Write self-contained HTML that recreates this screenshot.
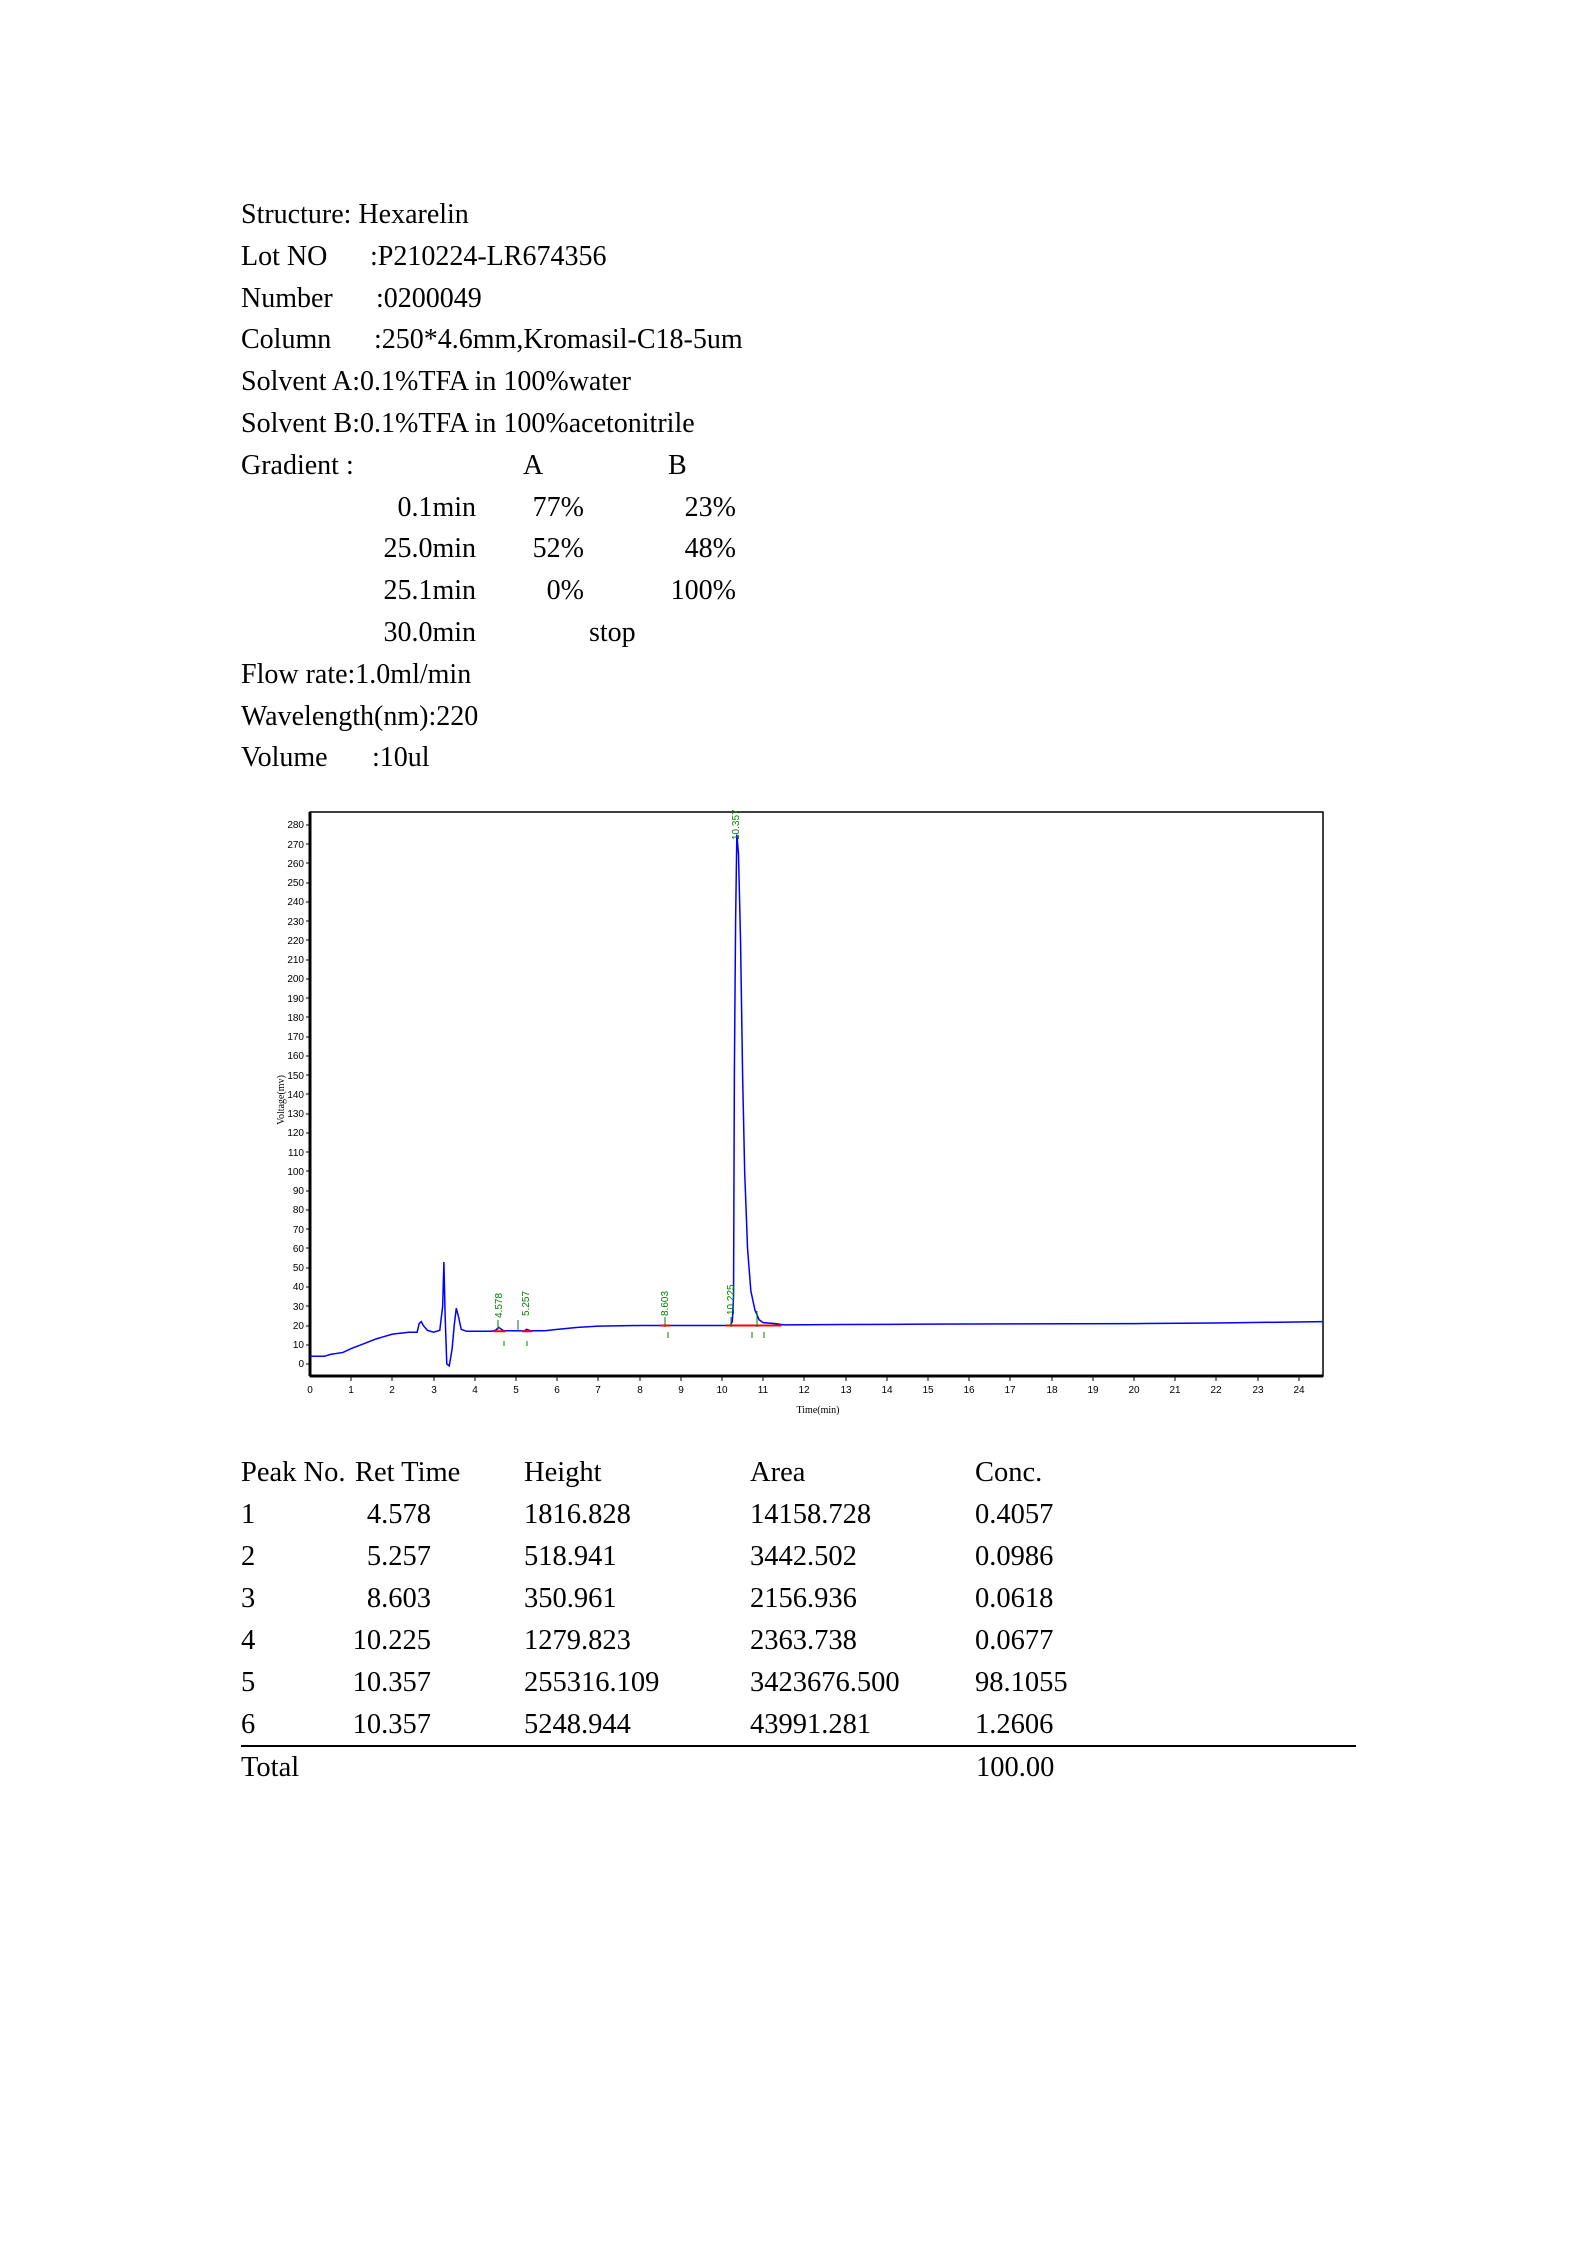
<!DOCTYPE html>
<html><head><meta charset="utf-8"><style>
body{margin:0;background:#fff;}
.p{position:relative;width:1587px;height:2245px;overflow:hidden;font-family:"Liberation Serif",serif;color:#000;}
.t{position:absolute;font-size:28px;line-height:42px;white-space:pre;}
.q{font-size:28.5px;}
.r{text-align:right;}
</style></head><body><div class="p">
<div class="t" style="left:241px;top:194px">Structure: Hexarelin</div>
<div class="t" style="left:241px;top:236px">Lot NO</div><div class="t" style="left:370px;top:236px">:P210224-LR674356</div>
<div class="t" style="left:241px;top:278px">Number</div><div class="t" style="left:376px;top:278px">:0200049</div>
<div class="t" style="left:241px;top:319px">Column</div><div class="t" style="left:374px;top:319px">:250*4.6mm,Kromasil-C18-5um</div>
<div class="t" style="left:241px;top:361px">Solvent A:0.1%TFA in 100%water</div>
<div class="t" style="left:241px;top:403px">Solvent B:0.1%TFA in 100%acetonitrile</div>
<div class="t" style="left:241px;top:445px">Gradient :</div><div class="t" style="left:523px;top:445px">A</div><div class="t" style="left:668px;top:445px">B</div>
<div class="t r" style="left:300px;width:176px;top:487px">0.1min</div><div class="t r" style="left:480px;width:104px;top:487px">77%</div><div class="t r" style="left:630px;width:106px;top:487px">23%</div>
<div class="t r" style="left:300px;width:176px;top:528px">25.0min</div><div class="t r" style="left:480px;width:104px;top:528px">52%</div><div class="t r" style="left:630px;width:106px;top:528px">48%</div>
<div class="t r" style="left:300px;width:176px;top:570px">25.1min</div><div class="t r" style="left:480px;width:104px;top:570px">0%</div><div class="t r" style="left:630px;width:106px;top:570px">100%</div>
<div class="t r" style="left:300px;width:176px;top:612px">30.0min</div><div class="t" style="left:589px;top:612px">stop</div>
<div class="t" style="left:241px;top:654px">Flow rate:1.0ml/min</div>
<div class="t" style="left:241px;top:696px">Wavelength(nm):220</div>
<div class="t" style="left:241px;top:737px">Volume</div><div class="t" style="left:372px;top:737px">:10ul</div>

<svg style="position:absolute;left:0;top:0" width="1587" height="2245">
<rect x="310" y="812" width="1013" height="564" fill="none" stroke="#000" stroke-width="1.5"/>
<line x1="310" y1="1376" x2="1323" y2="1376" stroke="#000" stroke-width="3"/>
<line x1="310" y1="812" x2="310" y2="1376" stroke="#000" stroke-width="3"/>
<g font-family="Liberation Sans,sans-serif" font-size="10" fill="#000" text-anchor="end">
<text x="304" y="1367">0</text><text x="304" y="1348">10</text><text x="304" y="1329">20</text><text x="304" y="1310">30</text><text x="304" y="1290">40</text><text x="304" y="1271">50</text><text x="304" y="1252">60</text><text x="304" y="1233">70</text><text x="304" y="1213">80</text><text x="304" y="1194">90</text><text x="304" y="1175">100</text><text x="304" y="1156">110</text><text x="304" y="1136">120</text><text x="304" y="1117">130</text><text x="304" y="1098">140</text><text x="304" y="1079">150</text><text x="304" y="1059">160</text><text x="304" y="1040">170</text><text x="304" y="1021">180</text><text x="304" y="1002">190</text><text x="304" y="982">200</text><text x="304" y="963">210</text><text x="304" y="944">220</text><text x="304" y="925">230</text><text x="304" y="905">240</text><text x="304" y="886">250</text><text x="304" y="867">260</text><text x="304" y="848">270</text><text x="304" y="828">280</text>
</g>
<g font-family="Liberation Sans,sans-serif" font-size="10" fill="#000" text-anchor="middle">
<text x="310" y="1393">0</text><text x="351" y="1393">1</text><text x="392" y="1393">2</text><text x="434" y="1393">3</text><text x="475" y="1393">4</text><text x="516" y="1393">5</text><text x="557" y="1393">6</text><text x="598" y="1393">7</text><text x="640" y="1393">8</text><text x="681" y="1393">9</text><text x="722" y="1393">10</text><text x="763" y="1393">11</text><text x="804" y="1393">12</text><text x="846" y="1393">13</text><text x="887" y="1393">14</text><text x="928" y="1393">15</text><text x="969" y="1393">16</text><text x="1010" y="1393">17</text><text x="1052" y="1393">18</text><text x="1093" y="1393">19</text><text x="1134" y="1393">20</text><text x="1175" y="1393">21</text><text x="1216" y="1393">22</text><text x="1258" y="1393">23</text><text x="1299" y="1393">24</text>
<text x="818" y="1413" font-family="Liberation Serif,serif">Time(min)</text>
<text transform="translate(284,1100) rotate(-90)" font-family="Liberation Serif,serif">Voltage(mv)</text>
</g>
<path d="M306 1364h4M306 1345h4M306 1326h4M306 1306h4M306 1287h4M306 1268h4M306 1248h4M306 1229h4M306 1210h4M306 1191h4M306 1171h4M306 1152h4M306 1133h4M306 1114h4M306 1094h4M306 1075h4M306 1056h4M306 1037h4M306 1017h4M306 998h4M306 979h4M306 960h4M306 940h4M306 921h4M306 902h4M306 883h4M306 863h4M306 844h4M306 825h4
M351 1376v5M392 1376v5M434 1376v5M475 1376v5M516 1376v5M557 1376v5M598 1376v5M640 1376v5M681 1376v5M722 1376v5M763 1376v5M804 1376v5M846 1376v5M887 1376v5M928 1376v5M969 1376v5M1010 1376v5M1052 1376v5M1093 1376v5M1134 1376v5M1175 1376v5M1216 1376v5M1258 1376v5M1299 1376v5" stroke="#000" stroke-width="1"/>
<g transform="translate(310,1364) scale(41.2,-1.925)">
<polyline vector-effect="non-scaling-stroke" fill="none" stroke="#0000ff" stroke-width="1.5" points="0,4 0.35,4 0.5,5 0.8,6 1,8 1.3,10.5 1.6,13 2,15.5 2.4,16.5 2.6,16.5 2.65,21 2.7,22 2.75,20 2.85,17.5 3.0,16.5 3.15,17.5 3.22,30 3.25,53 3.28,25 3.32,0 3.38,-1 3.45,8 3.5,20 3.55,29 3.6,25 3.67,18 3.8,17 4.4,17 4.5,17.5 4.58,19 4.7,17.3 5.2,17.2 5.26,18 5.35,17.3 5.7,17.3 6,18 6.5,19 7,19.7 8,20 10.2,20 10.25,22 10.28,35 10.3,150 10.33,230 10.36,275 10.4,265 10.45,220 10.5,150 10.55,100 10.62,60 10.7,38 10.8,28 10.9,23 11.0,21.5 11.3,21 11.5,20.3 13,20.5 15,20.7 20,21 22,21.3 24.6,22"/>
<path vector-effect="non-scaling-stroke" d="M4.45 17H4.75M5.15 17H5.4M8.5 20H8.75M10.1 20H11.45" stroke="#ff0000" stroke-width="2"/>
</g>
<g stroke="#008000" stroke-width="1">
<path d="M498 1330v-10M518 1330v-10M665 1327v-10M731 1327v-10M757 1327v-16M504 1346v-5M527 1346v-5M668 1332v6M752 1332v6M764 1332v6"/>
</g>
<g font-family="Liberation Sans,sans-serif" font-size="10" fill="#008000">
<text transform="translate(502,1318) rotate(-90)">4.578</text>
<text transform="translate(529,1316) rotate(-90)">5.257</text>
<text transform="translate(668,1316) rotate(-90)">8.603</text>
<text transform="translate(734,1315) rotate(-90)">10.225</text>
<text transform="translate(739,840) rotate(-90)">10.357</text>
</g>
</svg>

<div class="t q" style="left:241px;top:1452px">Peak No.</div><div class="t q" style="left:355px;top:1452px">Ret Time</div><div class="t q" style="left:524px;top:1452px">Height</div><div class="t q" style="left:750px;top:1452px">Area</div><div class="t q" style="left:975px;top:1452px">Conc.</div>
<div class="t q" style="left:241px;top:1494px">1</div><div class="t q r" style="left:330px;width:101px;top:1494px">4.578</div><div class="t q" style="left:524px;top:1494px">1816.828</div><div class="t q" style="left:750px;top:1494px">14158.728</div><div class="t q" style="left:975px;top:1494px">0.4057</div>
<div class="t q" style="left:241px;top:1536px">2</div><div class="t q r" style="left:330px;width:101px;top:1536px">5.257</div><div class="t q" style="left:524px;top:1536px">518.941</div><div class="t q" style="left:750px;top:1536px">3442.502</div><div class="t q" style="left:975px;top:1536px">0.0986</div>
<div class="t q" style="left:241px;top:1578px">3</div><div class="t q r" style="left:330px;width:101px;top:1578px">8.603</div><div class="t q" style="left:524px;top:1578px">350.961</div><div class="t q" style="left:750px;top:1578px">2156.936</div><div class="t q" style="left:975px;top:1578px">0.0618</div>
<div class="t q" style="left:241px;top:1620px">4</div><div class="t q r" style="left:330px;width:101px;top:1620px">10.225</div><div class="t q" style="left:524px;top:1620px">1279.823</div><div class="t q" style="left:750px;top:1620px">2363.738</div><div class="t q" style="left:975px;top:1620px">0.0677</div>
<div class="t q" style="left:241px;top:1662px">5</div><div class="t q r" style="left:330px;width:101px;top:1662px">10.357</div><div class="t q" style="left:524px;top:1662px">255316.109</div><div class="t q" style="left:750px;top:1662px">3423676.500</div><div class="t q" style="left:975px;top:1662px">98.1055</div>
<div class="t q" style="left:241px;top:1704px">6</div><div class="t q r" style="left:330px;width:101px;top:1704px">10.357</div><div class="t q" style="left:524px;top:1704px">5248.944</div><div class="t q" style="left:750px;top:1704px">43991.281</div><div class="t q" style="left:975px;top:1704px">1.2606</div>
<div style="position:absolute;left:241px;top:1745px;width:1115px;height:2px;background:#000"></div>
<div class="t q" style="left:241px;top:1747px">Total</div><div class="t q" style="left:976px;top:1747px">100.00</div>
</div></body></html>
